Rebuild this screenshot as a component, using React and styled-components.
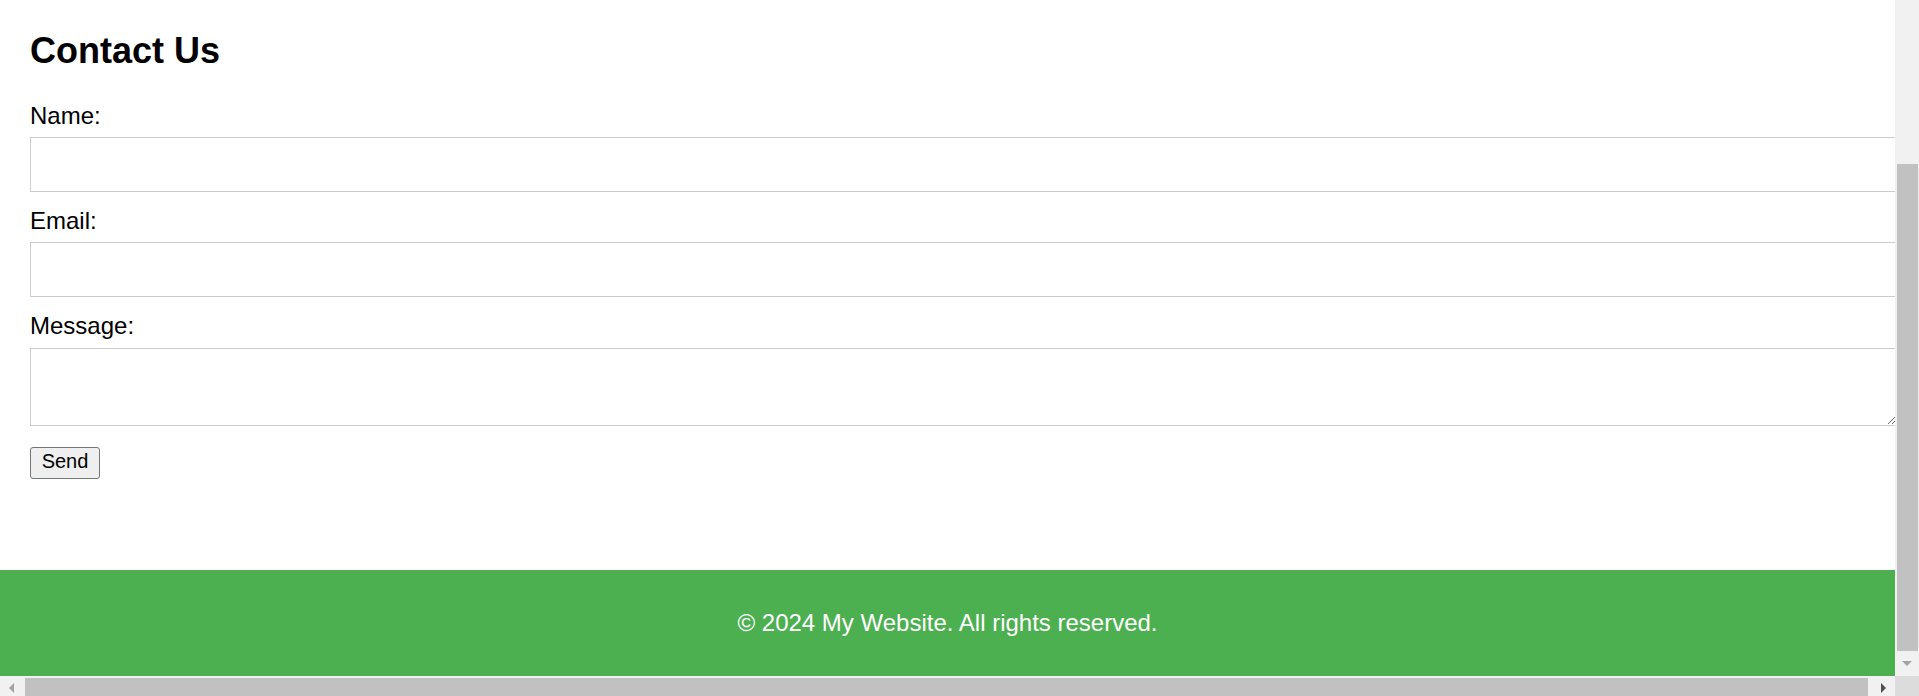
import styled, { createGlobalStyle } from "styled-components"

const GlobalStyle = createGlobalStyle`
  html, body {
    margin: 0;
    padding: 0;
    overflow: hidden;
  }
  body {
    font-family: "Liberation Sans", Arial, sans-serif;
    color: #000;
    background: #fff;
  }
`

const Screen = styled.div`
  display: grid;
  grid-template-columns: 1fr 24px;
  grid-template-rows: 676px 20px;
  height: 696px;
`

const Page = styled.main`
  display: flex;
  flex-direction: column;
  min-width: 0;
  overflow: hidden;
`

const Section = styled.section`
  flex: 1;
  padding: 30px 30px 0;
`

const Title = styled.h2`
  margin: 0 0 31px;
  font-size: 36px;
  line-height: 41px;
  font-weight: bold;
`

const Label = styled.label`
  display: block;
  font-size: 24px;
  line-height: 27px;
`

const Field = styled.input`
  display: block;
  width: 100%;
  height: 23px;
  margin: 8px 0 15px;
  padding: 15px;
  border: 1px solid #ccc;
  font: 20px "Liberation Sans", Arial, sans-serif;
  background: #fff;
  outline: none;
`

const MessageBox = styled.textarea`
  display: block;
  width: 100%;
  height: 46px;
  margin: 9px 0 21px;
  padding: 15px;
  border: 1px solid #ccc;
  font: 20px/23px "Liberation Sans", Arial, sans-serif;
  background: #fff;
  outline: none;
`

const SendButton = styled.button`
  display: block;
  box-sizing: border-box;
  width: 70px;
  height: 32px;
  padding: 0 0 3px;
  border: 1px solid #767676;
  border-radius: 3px;
  background: #efefef;
  color: #000;
  font: 20px "Liberation Sans", Arial, sans-serif;
`

const Footer = styled.footer`
  padding: 39px 0;
  background: #4caf50;
  color: #fff;
  text-align: center;
  font-size: 24px;
  line-height: 28px;
`

/* browser scrollbars, as they appear in the shot */
const VBar = styled.div`
  display: flex;
  flex-direction: column;
  background: #f1f1f1;
`

const VTrack = styled.div`
  flex: 1;
  display: flex;
  padding: 164px 1px 0 2px;
`

const HBar = styled.div`
  display: flex;
  background: #f1f1f1;
`

const HTrack = styled.div`
  flex: 1;
  display: flex;
  padding-top: 2px;
`

const Thumb = styled.div`
  flex: 1;
  background: #c1c1c1;
`

const ArrowButton = styled.div`
  flex: none;
  width: ${(p) => p.$w}px;
  height: ${(p) => p.$h}px;
  svg {
    display: block;
  }
`

const Corner = styled.div`
  background: #dcdcdc;
`

const Arrow = ({ w, h, points, color }) => (
  <ArrowButton $w={w} $h={h}>
    <svg width={w} height={h} viewBox={`0 0 ${w} ${h}`}>
      <polygon points={points} fill={color} />
    </svg>
  </ArrowButton>
)

export default function App() {
  return (
    <>
      <GlobalStyle />
      <Screen>
        <Page>
          <Section>
            <Title>Contact Us</Title>
            <form onSubmit={(e) => e.preventDefault()}>
              <Label htmlFor="name">Name:</Label>
              <Field id="name" type="text" />
              <Label htmlFor="email">Email:</Label>
              <Field id="email" type="email" />
              <Label htmlFor="message">Message:</Label>
              <MessageBox id="message" />
              <SendButton type="submit">Send</SendButton>
            </form>
          </Section>
          <Footer>© 2024 My Website. All rights reserved.</Footer>
        </Page>
        <VBar>
          <VTrack>
            <Thumb />
          </VTrack>
          <Arrow w={24} h={25} points="7,10 17,10 12,15" color="#a3a3a3" />
        </VBar>
        <HBar>
          <Arrow w={25} h={20} points="14,7 14,17 9,12" color="#a3a3a3" />
          <HTrack>
            <Thumb />
          </HTrack>
          <Arrow w={27} h={20} points="13,7 13,17 18,12" color="#505050" />
        </HBar>
        <Corner />
      </Screen>
    </>
  )
}
